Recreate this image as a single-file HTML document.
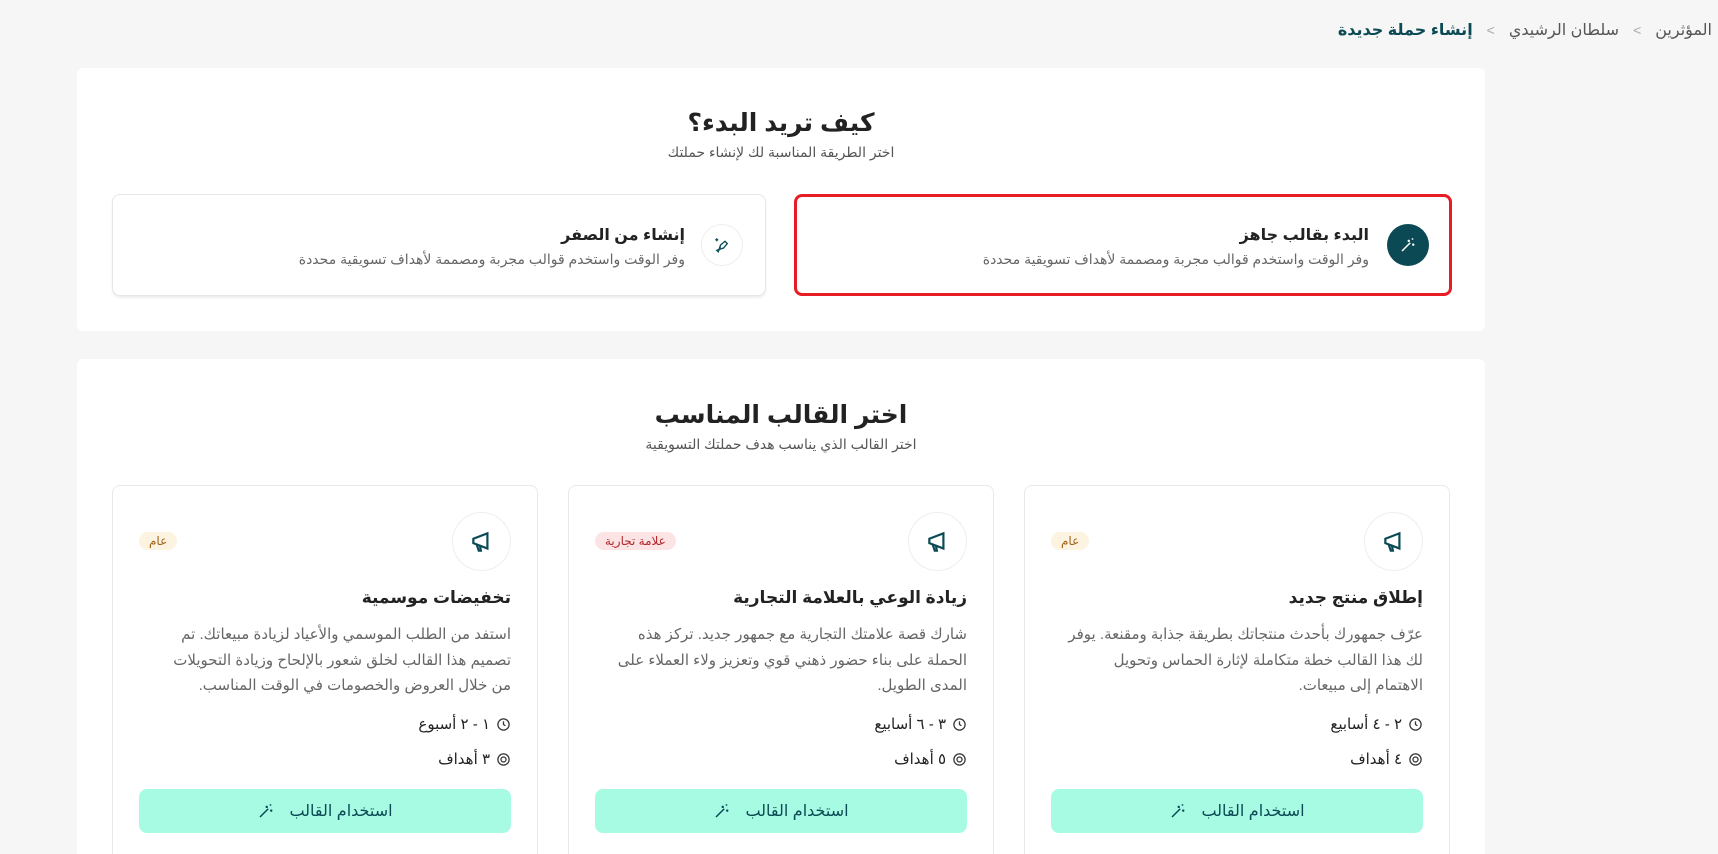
<!DOCTYPE html>
<html lang="ar" dir="rtl"><head><meta charset="utf-8"><style>
*{box-sizing:border-box;margin:0;padding:0}
html{width:1718px;height:854px;overflow:hidden}
body{width:1718px;height:854px;overflow:hidden;background:#f6f6f6;font-family:"Liberation Sans","DejaVu Sans",sans-serif;color:#222;position:relative}
.bc{position:absolute;top:20px;right:6px;font-size:16px;color:#555;display:flex;gap:14px;align-items:center}
.bc .cur{color:#0b4a55;font-weight:bold}
.bc .sep{color:#aaa;font-size:14px}
.card{position:absolute;left:77px;width:1408px;background:#fff;border-radius:6px;overflow:hidden}
h2{text-align:center;font-size:25px;font-weight:bold;color:#222}
.sub{text-align:center;font-size:14px;color:#555;margin-top:6px}
.opt{position:absolute;top:126px;height:102px;border:1px solid #e6e6e6;border-radius:8px;box-shadow:0 2px 2px #eee}
.opt .ic{position:absolute;right:22px;top:29px;width:42px;height:42px;border-radius:50%;display:flex;align-items:center;justify-content:center}
.opt .t{position:absolute;right:80px;top:30px;font-size:16px;font-weight:bold}
.opt .d{position:absolute;right:80px;top:56px;font-size:14px;color:#666;white-space:nowrap}
.tc{position:absolute;top:126px;width:426px;height:369px;border:1px solid #e8e8e8;border-bottom:none;border-radius:8px 8px 0 0}
.tc .ic{position:absolute;right:26px;top:26px;width:59px;height:59px;border-radius:50%;border:1px solid #eee;display:flex;align-items:center;justify-content:center}
.badge{position:absolute;left:26px;top:46px;padding:2px 10px;border-radius:14px;font-size:12px}
.tc .t{position:absolute;right:26px;top:102px;font-size:17px;font-weight:bold}
.tc .d{position:absolute;right:26px;left:40px;top:136px;font-size:15px;color:#666;line-height:25.5px}
.tc .m{position:absolute;right:26px;font-size:15px;display:flex;align-items:center;gap:6px}
.btn{position:absolute;left:26px;right:26px;top:303px;height:44px;background:#a6fbe2;border-radius:8px;display:flex;align-items:center;justify-content:center;gap:14px;font-size:16px;color:#0b4a55}
</style></head><body>
<div class="bc"><span>المؤثرين</span><span class="sep">&gt;</span><span>سلطان الرشيدي</span><span class="sep">&gt;</span><span class="cur">إنشاء حملة جديدة</span></div>

<div class="card" style="top:68px;height:263px">
 <h2 style="margin-top:40px">كيف تريد البدء؟</h2>
 <div class="sub">اختر الطريقة المناسبة لك لإنشاء حملتك</div>
 <div class="opt" style="right:33px;width:658px;border:3px solid #e81c24;box-shadow:none">
  <div class="ic" style="background:#0b4a55;right:20px;top:27px"><svg width="18" height="18" viewBox="0 0 24 24" fill="none" stroke="#fff" stroke-width="2"><path d="M4 20L15 9M13 5v3M11.5 6.5h3M19 10v3M17.5 11.5h3M18 3v2M17 4h2"/></svg></div>
  <div class="t" style="top:28px">البدء بقالب جاهز</div>
  <div class="d" style="top:54px">وفر الوقت واستخدم قوالب مجربة ومصممة لأهداف تسويقية محددة</div>
 </div>
 <div class="opt" style="right:719px;width:654px">
  <div class="ic" style="border:1px solid #eee"><svg width="18" height="18" viewBox="0 0 24 24" fill="none" stroke="#0b4a55" stroke-width="1.8"><path d="M7 21l3-9 6-5 3 3-5 6-9 3zM10 14l-3 7M5 3v4M3 5h4"/></svg></div>
  <div class="t">إنشاء من الصفر</div>
  <div class="d">وفر الوقت واستخدم قوالب مجربة ومصممة لأهداف تسويقية محددة</div>
 </div>
</div>

<div class="card" style="top:359px;height:495px;border-radius:6px 6px 0 0">
 <h2 style="margin-top:41px">اختر القالب المناسب</h2>
 <div class="sub">اختر القالب الذي يناسب هدف حملتك التسويقية</div>

 <div class="tc" style="right:35px">
  <div class="ic"><svg width="26" height="26" viewBox="0 0 24 24" fill="none" stroke="#0b4a55" stroke-width="2"><path d="M4 9l13-5v14L4 13zM4 9v4M7 14l2 6h2l-1-5"/></svg></div>
  <div class="badge" style="background:#fdf3e1;color:#a0651a">عام</div>
  <div class="t">إطلاق منتج جديد</div>
  <div class="d">عرّف جمهورك بأحدث منتجاتك بطريقة جذابة ومقنعة. يوفر لك هذا القالب خطة متكاملة لإثارة الحماس وتحويل الاهتمام إلى مبيعات.</div>
  <div class="m" style="top:229px"><svg width="15" height="15" viewBox="0 0 24 24" fill="none" stroke="#333" stroke-width="2"><circle cx="12" cy="12" r="9"/><path d="M12 7v5l3 2"/></svg>٢ - ٤ أسابيع</div>
  <div class="m" style="top:264px"><svg width="15" height="15" viewBox="0 0 24 24" fill="none" stroke="#333" stroke-width="2"><circle cx="12" cy="12" r="9"/><circle cx="12" cy="12" r="4"/></svg>٤ أهداف</div>
  <div class="btn"><span>استخدام القالب</span><svg width="18" height="18" viewBox="0 0 24 24" fill="none" stroke="#0b4a55" stroke-width="2"><path d="M4 20L15 9M13 5v3M11.5 6.5h3M19 10v3M17.5 11.5h3M18 3v2M17 4h2"/></svg></div>
 </div>
 <div class="tc" style="right:491px">
  <div class="ic"><svg width="26" height="26" viewBox="0 0 24 24" fill="none" stroke="#0b4a55" stroke-width="2"><path d="M4 9l13-5v14L4 13zM4 9v4M7 14l2 6h2l-1-5"/></svg></div>
  <div class="badge" style="background:#fde4e4;color:#b3262d">علامة تجارية</div>
  <div class="t">زيادة الوعي بالعلامة التجارية</div>
  <div class="d">شارك قصة علامتك التجارية مع جمهور جديد. تركز هذه الحملة على بناء حضور ذهني قوي وتعزيز ولاء العملاء على المدى الطويل.</div>
  <div class="m" style="top:229px"><svg width="15" height="15" viewBox="0 0 24 24" fill="none" stroke="#333" stroke-width="2"><circle cx="12" cy="12" r="9"/><path d="M12 7v5l3 2"/></svg>٣ - ٦ أسابيع</div>
  <div class="m" style="top:264px"><svg width="15" height="15" viewBox="0 0 24 24" fill="none" stroke="#333" stroke-width="2"><circle cx="12" cy="12" r="9"/><circle cx="12" cy="12" r="4"/></svg>٥ أهداف</div>
  <div class="btn"><span>استخدام القالب</span><svg width="18" height="18" viewBox="0 0 24 24" fill="none" stroke="#0b4a55" stroke-width="2"><path d="M4 20L15 9M13 5v3M11.5 6.5h3M19 10v3M17.5 11.5h3M18 3v2M17 4h2"/></svg></div>
 </div>
 <div class="tc" style="right:947px">
  <div class="ic"><svg width="26" height="26" viewBox="0 0 24 24" fill="none" stroke="#0b4a55" stroke-width="2"><path d="M4 9l13-5v14L4 13zM4 9v4M7 14l2 6h2l-1-5"/></svg></div>
  <div class="badge" style="background:#fdf3e1;color:#a0651a">عام</div>
  <div class="t">تخفيضات موسمية</div>
  <div class="d">استفد من الطلب الموسمي والأعياد لزيادة مبيعاتك. تم تصميم هذا القالب لخلق شعور بالإلحاح وزيادة التحويلات من خلال العروض والخصومات في الوقت المناسب.</div>
  <div class="m" style="top:229px"><svg width="15" height="15" viewBox="0 0 24 24" fill="none" stroke="#333" stroke-width="2"><circle cx="12" cy="12" r="9"/><path d="M12 7v5l3 2"/></svg>١ - ٢ أسبوع</div>
  <div class="m" style="top:264px"><svg width="15" height="15" viewBox="0 0 24 24" fill="none" stroke="#333" stroke-width="2"><circle cx="12" cy="12" r="9"/><circle cx="12" cy="12" r="4"/></svg>٣ أهداف</div>
  <div class="btn"><span>استخدام القالب</span><svg width="18" height="18" viewBox="0 0 24 24" fill="none" stroke="#0b4a55" stroke-width="2"><path d="M4 20L15 9M13 5v3M11.5 6.5h3M19 10v3M17.5 11.5h3M18 3v2M17 4h2"/></svg></div>
 </div>
</div>
</body></html>
